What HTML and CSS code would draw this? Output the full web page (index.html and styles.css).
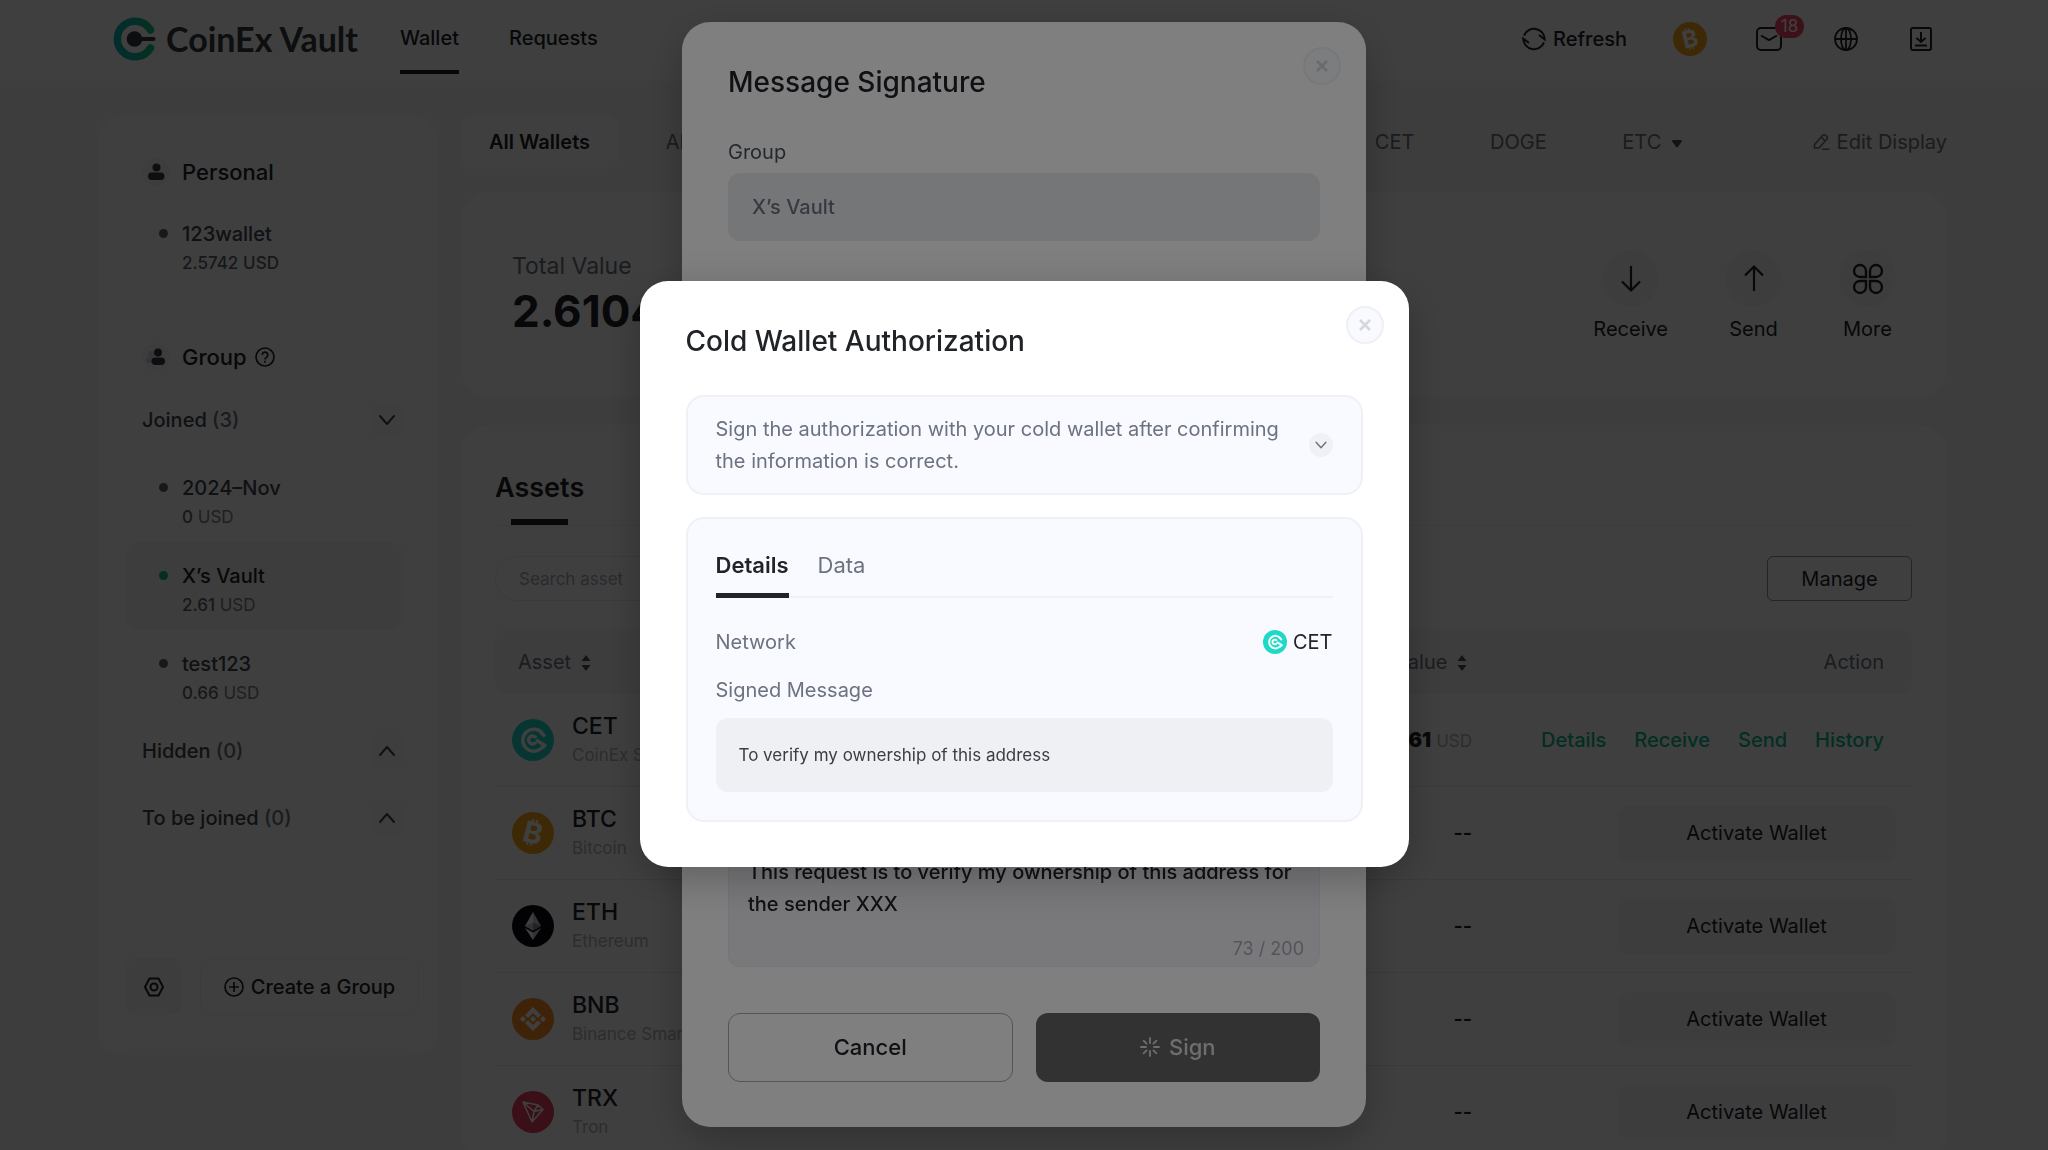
FILE: index.html
```html
<!doctype html>
<html lang="en">
  <head>
    <meta charset="utf-8">
    <title>CoinEx Vault</title>
    <link rel="stylesheet" href="styles.css">
  </head>
  <body>
    <!-- shared icons -->
    <svg class="sprite" width="0" height="0">
      <symbol id="close" viewBox="0 0 16 16"><path d="M3 3l10 10M13 3L3 13" stroke="currentColor" stroke-width="2.6" fill="none"/></symbol>
      <symbol id="down" viewBox="0 0 20 20"><path d="M3 6l7 8 7-8" stroke="currentColor" stroke-width="2" fill="none" stroke-linecap="round" stroke-linejoin="round"/></symbol>
      <symbol id="up" viewBox="0 0 20 20"><path d="M3 14l7-8 7 8" stroke="currentColor" stroke-width="2" fill="none" stroke-linecap="round" stroke-linejoin="round"/></symbol>
      <symbol id="sort" viewBox="0 0 10 18"><path d="M5 1l4.5 6h-9zM5 17L.5 11h9z" fill="currentColor"/></symbol>
      <symbol id="cet" viewBox="0 0 42 42">
        <circle cx="21" cy="21" r="21" fill="#1cd9c8"/>
        <path d="M30.5 14.5A11 11 0 1 0 29 29.500L33 26.500 24 21" fill="none" stroke="#fff" stroke-width="3.400" stroke-linejoin="round"/>
        <path d="M33 17.500L28 12.500M24 19a4 4 0 1 0 0 4" fill="none" stroke="#fff" stroke-width="3.400"/>
      </symbol>
      <symbol id="btc" viewBox="0 0 42 42">
        <circle cx="21" cy="21" r="21" fill="#f9a51e"/>
        <text class="coin-sign" x="21" y="31" text-anchor="middle" transform="rotate(14 21 21)">₿</text>
      </symbol>
      <symbol id="btc-avatar" viewBox="0 0 42 42">
        <circle cx="21" cy="21" r="21" fill="#f9a51e"/>
        <text class="coin-sign" x="21" y="31" text-anchor="middle" transform="rotate(-14 21 21)">₿</text>
      </symbol>
      <symbol id="eth" viewBox="0 0 42 42">
        <circle cx="21" cy="21" r="21" fill="#0a0a14"/>
        <path d="M21 7l-8 14 8 4.500z" fill="#fff"/>
        <path d="M21 7l8 14-8 4.500z" fill="#c8c8cc"/>
        <path d="M13 21l8-3.500v8z" fill="#c8c8cc"/>
        <path d="M29 21l-8-3.500v8z" fill="#8c8c92"/>
        <path d="M13 23l8 4.500V35z" fill="#fff"/>
        <path d="M29 23l-8 4.500V35z" fill="#c8c8cc"/>
      </symbol>
      <symbol id="bnb" viewBox="0 0 42 42">
        <circle cx="21" cy="21" r="21" fill="#f88d22"/>
        <path d="M21 9l8 8-3 3-5-5-5 5-3-3zM21 33l8-8-3-3-5 5-5-5-3 3zM21 18l3 3-3 3-3-3zM11 18l3 3-3 3-3-3zM31 18l3 3-3 3-3-3z" fill="#fff"/>
      </symbol>
      <symbol id="trx" viewBox="0 0 42 42">
        <circle cx="21" cy="21" r="21" fill="#ea3d63"/>
        <path d="M11 11l15 3 5 4.500L20 31zM11 11l11 9.500 4-6.500M22 20.500l9-2M22 20.500L20 31" fill="none" stroke="#fff" stroke-width="1.500" stroke-linejoin="round"/>
      </symbol>
    </svg>

    <header class="header">
      <a class="logo" href="#">
        <svg width="44" height="44" viewBox="0 0 44 44">
          <defs>
            <linearGradient id="logofill" x1="0" x2="1"><stop offset="0" stop-color="#0cb4b4"/><stop offset="1" stop-color="#14c08c"/></linearGradient>
          </defs>
          <path d="M37.500 13A17.800 17.800 0 1 0 37.500 31" fill="none" stroke="url(#logofill)" stroke-width="7.500" stroke-linecap="round"/>
          <circle cx="21.500" cy="22" r="7.800" fill="#36383c"/>
          <path d="M22 22h18.500" stroke="#36383c" stroke-width="4" stroke-linecap="round"/>
        </svg>
        <span>CoinEx Vault</span>
      </a>
      <nav class="nav">
        <a class="active" href="#">Wallet</a>
        <a href="#">Requests</a>
      </nav>
      <div class="tools">
        <button class="refresh" type="button">
          <svg width="24" height="24" viewBox="0 0 24 24" fill="none" stroke="currentColor" stroke-width="2"><path d="M2 8.500A10.800 10.800 0 0 1 22.800 12.500L17 8M22 15.500A10.800 10.800 0 0 1 1.200 11.500L7 16"/></svg>
          Refresh
        </button>
        <svg class="avatar" width="34" height="34"><use href="#btc-avatar"/></svg>
        <button class="mail" type="button" aria-label="Messages">
          <svg width="26" height="24" viewBox="0 0 26 24" fill="none" stroke="currentColor" stroke-width="2"><rect x="1" y="1" width="24" height="22" rx="4"/><path d="M5 8.500l8 4.500 8-4.500"/></svg>
          <span class="badge">18</span>
        </button>
        <button type="button" aria-label="Language">
          <svg width="24" height="24" viewBox="0 0 24 24" fill="none" stroke="currentColor" stroke-width="1.800"><circle cx="12" cy="12" r="11"/><ellipse cx="12" cy="12" rx="5" ry="11"/><path d="M1 12h22M12 1v22"/></svg>
        </button>
        <button type="button" aria-label="Download">
          <svg width="22" height="24" viewBox="0 0 22 24" fill="none" stroke="currentColor" stroke-width="2"><rect x="1" y="1" width="20" height="22" rx="2"/><path d="M11 5v10M6.500 11l4.500 4 4.500-4M5 18.500h12"/></svg>
        </button>
      </div>
    </header>

    <div class="page">
      <aside class="sidebar">
        <h2 class="side-title">
          <svg width="28" height="28" viewBox="0 0 28 28"><circle cx="14" cy="14" r="14" fill="#f4f5f7"/><circle cx="14.500" cy="9.500" r="4" fill="#36393f"/><rect x="6" y="14.500" width="16.500" height="7.500" rx="3.700" fill="#36393f"/></svg>
          Personal
        </h2>
        <a class="vault" href="#">
          <span class="name">123wallet</span>
          <span class="usd"><b>2.5742</b> <b>USD</b></span>
        </a>

        <h2 class="side-title second">
          <svg width="28" height="28" viewBox="0 0 28 28"><circle cx="14" cy="14" r="14" fill="#f4f5f7"/><circle cx="9" cy="11" r="3" fill="#d2d4da"/><rect x="4" y="14.500" width="9" height="5.500" rx="2.500" fill="#d2d4da"/><circle cx="16" cy="9.500" r="4" fill="#36393f"/><rect x="9.500" y="14.500" width="13.500" height="7.500" rx="3.700" fill="#36393f"/></svg>
          Group
          <svg class="help" width="20" height="20" viewBox="0 0 20 20" fill="none" stroke="currentColor" stroke-width="1.700"><circle cx="10" cy="10" r="9"/><path d="M7.200 8a2.800 2.800 0 1 1 4.300 2.300c-1 .7-1.500 1-1.500 2.200"/><path d="M10 13.700v2"/></svg>
        </h2>

        <div class="fold">
          <span>Joined <i>(3)</i></span>
          <button type="button" aria-label="Collapse joined"><svg width="20" height="20"><use href="#down"/></svg></button>
        </div>
        <div class="vaults">
          <a class="vault" href="#">
            <span class="name">2024–Nov</span>
            <span class="usd"><b>0</b> USD</span>
          </a>
          <a class="vault current" href="#">
            <span class="name">X’s Vault</span>
            <span class="usd"><b>2.61</b> USD</span>
          </a>
          <a class="vault" href="#">
            <span class="name">test123</span>
            <span class="usd"><b>0.66</b> USD</span>
          </a>
        </div>
        <div class="fold hidden-list">
          <span>Hidden <i>(0)</i></span>
          <button type="button" aria-label="Expand hidden"><svg width="20" height="20"><use href="#up"/></svg></button>
        </div>
        <div class="fold">
          <span>To be joined <i>(0)</i></span>
          <button type="button" aria-label="Expand to be joined"><svg width="20" height="20"><use href="#up"/></svg></button>
        </div>

        <div class="side-buttons">
          <button class="settings" type="button" aria-label="Settings">
            <svg width="20" height="20" viewBox="0 0 20 20" fill="none" stroke="currentColor" stroke-width="2"><path d="M5.500 1.500h9l4.500 8.500-4.500 8.500h-9L1 10z" stroke-linejoin="round"/><circle cx="10" cy="10" r="3.500"/></svg>
          </button>
          <button class="create" type="button">
            <svg width="20" height="20" viewBox="0 0 20 20" fill="none" stroke="currentColor" stroke-width="1.700"><circle cx="10" cy="10" r="9"/><path d="M10 5v10M5 10h10"/></svg>
            Create a Group
          </button>
        </div>
      </aside>

      <main class="main">
        <div class="tabs-row">
          <div class="tabs">
            <a class="active" href="#">All Wallets</a>
            <a href="#">ARB</a>
            <a href="#">AVAX</a>
            <a href="#">BCH</a>
            <a href="#">BNB</a>
            <a href="#">BTC</a>
            <a href="#">BSC</a>
            <a href="#">CET</a>
            <a href="#">DOGE</a>
            <a class="more-tabs" href="#">ETC <svg width="12" height="10" viewBox="0 0 12 10"><path d="M2 2h8L6 7.500z" fill="#4a505c" stroke="#4a505c" stroke-width="2" stroke-linejoin="round"/></svg></a>
          </div>
          <button class="edit" type="button">
            <svg width="17" height="18" viewBox="0 0 17 18" fill="none" stroke="currentColor" stroke-width="1.600"><path d="M1.500 11.500L10 2.200q1.200-1 2.500 0l1.500 1.300q1 1.200 0 2.500L6 15H1.500zM8.500 4.500l3.500 3.300M9 16.200h7.500"/></svg>
            Edit Display
          </button>
        </div>

        <section class="card total">
          <div>
            <div class="total-label">Total Value</div>
            <div class="total-value">2.6104</div>
          </div>
          <div class="actions">
            <button type="button"><span class="circle"><svg width="26" height="30" viewBox="0 0 26 30" fill="none" stroke="currentColor" stroke-width="2.200"><path d="M13 2v24M4 17.500l9 9 9-9"/></svg></span>Receive</button>
            <button type="button"><span class="circle"><svg width="26" height="30" viewBox="0 0 26 30" fill="none" stroke="currentColor" stroke-width="2.200"><path d="M13 27V3M4 11.500l9-9 9 9"/></svg></span>Send</button>
            <button type="button"><span class="circle"><svg width="32" height="32" viewBox="0 0 32 32" fill="none" stroke="currentColor" stroke-width="2.400"><path d="M14 14H8a6 6 0 1 1 6-6zM18 14h6a6 6 0 1 0-6-6zM14 18H8a6 6 0 1 0 6 6zM18 18h6a6 6 0 1 1-6 6z"/></svg></span>More</button>
          </div>
        </section>

        <section class="card assets">
          <h2><span>Assets</span></h2>
          <div class="filter">
            <input type="text" placeholder="Search asset" aria-label="Search asset">
            <button type="button">Manage</button>
          </div>
          <table>
            <thead>
              <tr>
                <th class="asset">Asset <svg width="10" height="18"><use href="#sort"/></svg></th>
                <th class="value">Value <svg width="10" height="18"><use href="#sort"/></svg></th>
                <th class="action">Action</th>
              </tr>
            </thead>
            <tbody>
              <tr>
                <td><div class="coin"><svg width="42" height="42"><use href="#cet"/></svg><div>CET<small>CoinEx Smart Chain</small></div></div></td>
                <td class="value"><b>2.61</b> <small>USD</small></td>
                <td class="links"><a href="#">Details</a><a href="#">Receive</a><a href="#">Send</a><a href="#">History</a></td>
              </tr>
              <tr>
                <td><div class="coin"><svg width="42" height="42"><use href="#btc"/></svg><div>BTC<small>Bitcoin</small></div></div></td>
                <td class="value">--</td>
                <td class="activate"><button type="button">Activate Wallet</button></td>
              </tr>
              <tr>
                <td><div class="coin"><svg width="42" height="42"><use href="#eth"/></svg><div>ETH<small>Ethereum</small></div></div></td>
                <td class="value">--</td>
                <td class="activate"><button type="button">Activate Wallet</button></td>
              </tr>
              <tr>
                <td><div class="coin"><svg width="42" height="42"><use href="#bnb"/></svg><div>BNB<small>Binance Smart Chain</small></div></div></td>
                <td class="value">--</td>
                <td class="activate"><button type="button">Activate Wallet</button></td>
              </tr>
              <tr>
                <td><div class="coin"><svg width="42" height="42"><use href="#trx"/></svg><div>TRX<small>Tron</small></div></div></td>
                <td class="value">--</td>
                <td class="activate"><button type="button">Activate Wallet</button></td>
              </tr>
            </tbody>
          </table>
        </section>
      </main>
    </div>

    <div class="overlay">
      <form class="modal signature">
        <button class="close" type="button" aria-label="Close"><svg width="16" height="16"><use href="#close"/></svg></button>
        <h1>Message Signature</h1>
        <div class="fields">
          <div class="field">
            <label for="group">Group</label>
            <input id="group" type="text" value="X’s Vault" readonly>
          </div>
          <div class="field">
            <label for="network">Network</label>
            <input id="network" type="text" value="CET" readonly>
          </div>
          <div class="field">
            <label for="address">Address</label>
            <input id="address" type="text" readonly>
          </div>
          <div class="field">
            <label for="signed">Signed Message</label>
            <input id="signed" type="text" value="To verify my ownership of this address" readonly>
          </div>
          <div class="field">
            <label for="remark">Remark</label>
            <div class="area">
              <textarea id="remark" rows="2">This request is to verify my ownership of this address for the sender XXX</textarea>
              <span class="count">73 / 200</span>
            </div>
          </div>
        </div>
        <div class="modal-buttons">
          <button class="cancel" type="button">Cancel</button>
          <button class="sign" type="submit">
            <svg width="20" height="20" viewBox="0 0 20 20" stroke="currentColor" stroke-width="1.800" stroke-linecap="round"><path d="M10 1v5M10 14v5M1 10h5M14 10h5M3.600 3.600l3 3M13.400 13.400l3 3M3.600 16.400l3-3M13.400 6.600l3-3"/></svg>
            Sign
          </button>
        </div>
      </form>
    </div>

    <div class="overlay">
      <div class="modal auth">
        <button class="close" type="button" aria-label="Close"><svg width="16" height="16"><use href="#close"/></svg></button>
        <h1>Cold Wallet Authorization</h1>
        <div class="box tip">
          <p>Sign the authorization with your cold wallet after confirming the information is correct.</p>
          <button type="button" aria-label="Show more"><svg width="14" height="14"><use href="#down"/></svg></button>
        </div>
        <div class="box details">
          <div class="box-tabs">
            <a class="active" href="#">Details</a>
            <a href="#">Data</a>
          </div>
          <div class="line">
            <span>Network</span>
            <span class="network"><svg width="24" height="24"><use href="#cet"/></svg>CET</span>
          </div>
          <div class="line">Signed Message</div>
          <div class="message">To verify my ownership of this address</div>
        </div>
      </div>
    </div>
  </body>
</html>
```
FILE: styles.css
```css
* {
  box-sizing: border-box;
  margin: 0;
  padding: 0;
}

body {
  height: 100vh;
  overflow: hidden;
  background: #f4f5f7;
  color: #202328;
  font-family: Inter, "Liberation Sans", sans-serif;
  font-size: 20px;
}

a {
  color: inherit;
  text-decoration: none;
}

button, input, textarea {
  font: inherit;
  color: inherit;
  border: none;
  background: none;
}

svg {
  flex: none;
}

.sprite {
  display: none;
}

.coin-sign {
  font-family: Inter, sans-serif;
  font-size: 29px;
  font-weight: 700;
  fill: #fff;
}

/* header */
.header {
  display: flex;
  align-items: center;
  height: 81px;
  padding: 0 116px 4px 113px;
  background: #fff;
}

.logo {
  display: flex;
  align-items: center;
  gap: 9px;
  color: #36383c;
  font-family: Lato, sans-serif;
  font-size: 34px;
  font-weight: 700;
}

.nav {
  display: flex;
  gap: 50px;
  margin-left: 42px;
  font-weight: 500;
}

.nav a {
  padding: 21px 0 18px;
  line-height: 28px;
  border-bottom: 4px solid transparent;
}

.nav a.active {
  border-color: #202328;
}

.tools {
  display: flex;
  align-items: center;
  margin-left: auto;
}

.tools button {
  display: flex;
  align-items: center;
  margin-left: 52px;
}

.tools .refresh {
  gap: 7px;
  font-weight: 500;
}

.avatar {
  margin-left: 46px;
}

.tools .mail {
  position: relative;
  margin-left: 49px;
}

.badge {
  position: absolute;
  left: 19px;
  top: -12px;
  width: 29px;
  height: 23px;
  border-radius: 12px;
  background: #f24668;
  color: #fff;
  font-size: 17px;
  line-height: 23px;
  text-align: center;
}

/* layout */
.page {
  display: flex;
  align-items: flex-start;
  gap: 22px;
  padding: 34px 101px 0 97px;
}

.main {
  flex: 1;
  min-width: 0;
}

.card {
  border-radius: 28px;
  background: #fff;
}

/* sidebar */
.sidebar {
  flex: none;
  width: 342px;
  padding: 42px 20px 40px 28px;
  border-radius: 28px;
  background: #fff;
}

.side-title {
  display: flex;
  align-items: center;
  gap: 12px;
  padding-left: 17px;
  font-size: 22px;
  font-weight: 500;
  line-height: 30px;
  margin-bottom: 13px;
}

.side-title.second {
  margin-top: 54px;
  margin-bottom: 31px;
}

.side-title .help {
  margin-left: -4px;
}

.vaults {
  margin: 17px 0 16px;
}

.vault {
  position: relative;
  display: block;
  height: 88px;
  margin-right: 15px;
  padding: 20px 20px 10px 57px;
  border-radius: 16px;
  color: #3f444e;
  font-weight: 500;
}

.vault::before {
  content: "";
  position: absolute;
  left: 34px;
  top: 29px;
  width: 9px;
  height: 9px;
  border-radius: 50%;
  background: #5c6070;
}

.vault .name {
  display: block;
  line-height: 28px;
}

.vault .usd {
  display: block;
  color: #7a808c;
  font-size: 17px;
  font-weight: 400;
  line-height: 30px;
}

.vault .usd b {
  color: #5c626e;
  font-weight: 500;
}

.vault.current {
  background: #f4f5f7;
  color: #202328;
}

.vault.current::before {
  background: #14b88c;
}

.fold {
  display: flex;
  align-items: center;
  justify-content: space-between;
  margin-right: 15px;
  padding-left: 17px;
  color: #3f444e;
  font-weight: 500;
}

.fold i {
  color: #6b7280;
  font-style: normal;
}

.fold button {
  display: flex;
  align-items: center;
  justify-content: center;
  width: 34px;
  height: 34px;
  border-radius: 8px;
  background: #fafafb;
}

.fold.hidden-list {
  margin-bottom: 33px;
}

.side-buttons {
  display: flex;
  gap: 18px;
  margin-top: 123px;
}

.side-buttons button {
  display: flex;
  align-items: center;
  justify-content: center;
  gap: 7px;
  height: 57px;
  border-radius: 12px;
  font-weight: 500;
}

.side-buttons .settings {
  width: 57px;
  background: #f4f5f7;
}

.side-buttons .create {
  flex: 1;
  border: 1px solid #f0f1f4;
}

/* wallet tabs */
.tabs-row {
  display: flex;
  align-items: center;
  justify-content: space-between;
  color: #6b7280;
}

.tabs {
  display: flex;
  justify-content: space-between;
  flex: 0 1 1250px;
}

.tabs a {
  padding: 0 28px;
  border-radius: 12px;
  line-height: 54px;
}

.tabs a.active {
  background: #fff;
  color: #202328;
  font-weight: 600;
}

.more-tabs svg {
  margin-left: 4px;
}

.edit {
  display: flex;
  align-items: center;
  gap: 7px;
}

/* total */
.total {
  display: flex;
  justify-content: space-between;
  margin-top: 23px;
  padding: 58px 51px 54px;
}

.total-label {
  color: #6b7280;
  font-size: 23px;
  line-height: 32px;
}

.total-value {
  font-size: 44px;
  font-weight: 700;
  line-height: 58px;
}

.actions {
  display: flex;
  gap: 57px;
}

.actions button {
  display: flex;
  flex-direction: column;
  align-items: center;
  gap: 8px;
  line-height: 28px;
}

.circle {
  display: flex;
  align-items: center;
  justify-content: center;
  width: 57px;
  height: 57px;
  border-radius: 50%;
  background: #f6f7f9;
}

/* assets */
.assets {
  margin-top: 28px;
  padding: 44px 35px 0 34px;
}

.assets h2 {
  border-bottom: 1px solid #f0f1f4;
  font-size: 27px;
  font-weight: 600;
  line-height: 38px;
}

.assets h2 span {
  display: inline-block;
}

.assets h2 span::after {
  content: "";
  display: block;
  width: 57px;
  height: 6px;
  margin: 12px auto 0;
  background: #202328;
}

.filter {
  display: flex;
  justify-content: space-between;
  margin: 30px 0 28px;
}

.filter input {
  width: 330px;
  height: 45px;
  padding: 0 23px;
  border: 1px solid #ebecf0;
  border-radius: 23px;
  font-size: 17px;
}

.filter input::placeholder {
  color: #a6abb8;
}

.filter button {
  width: 145px;
  border: 1px solid #8a909c;
  border-radius: 6px;
}

table {
  width: 100%;
  border-collapse: separate;
  border-spacing: 0;
}

th {
  height: 65px;
  background: #f4f5f7;
  color: #6b7280;
  font-weight: 400;
}

th svg {
  margin-left: 4px;
  vertical-align: -3px;
  color: #4a505c;
}

th.asset {
  padding-left: 23px;
  border-radius: 12px 0 0 12px;
  text-align: left;
}

th.value {
  padding-right: 5px;
  text-align: right;
}

th.action {
  width: 440px;
  padding-right: 28px;
  border-radius: 0 12px 12px 0;
  text-align: right;
}

td {
  height: 93px;
  border-bottom: 1px solid #ebecf0;
}

.coin {
  display: flex;
  align-items: center;
  gap: 18px;
  padding-left: 17px;
  font-size: 23px;
  font-weight: 500;
  line-height: 30px;
}

.coin small {
  display: block;
  color: #b0b4be;
  font-size: 17px;
  font-weight: 400;
  line-height: 28px;
}

td.value {
  font-weight: 600;
  text-align: right;
}

td.value small {
  color: #b0b4be;
  font-size: 17px;
  font-weight: 400;
}

.links {
  padding-right: 28px;
  color: #0cb88c;
  font-weight: 500;
  text-align: right;
}

.links a {
  margin-left: 28px;
}

.activate {
  padding-right: 16px;
  text-align: right;
}

.activate button {
  width: 279px;
  height: 55px;
  border-radius: 12px;
  background: #f4f5f7;
}

/* modals */
.overlay {
  position: fixed;
  inset: 0;
  display: flex;
  align-items: center;
  justify-content: center;
  padding-bottom: 2px;
  background: rgba(0, 0, 0, .5);
}

.modal {
  position: relative;
  max-width: 94%;
  padding: 39px 46px 45px;
  border-radius: 28px;
  background: #fff;
  box-shadow: 0 12px 40px rgba(0, 0, 0, .24);
}

.modal h1 {
  font-size: 28px;
  font-weight: 500;
  line-height: 42px;
}

.close {
  position: absolute;
  top: 25px;
  right: 25px;
  display: flex;
  align-items: center;
  justify-content: center;
  width: 38px;
  height: 38px;
  border: 2px solid #eff0f5;
  border-radius: 50%;
  background: #f9faff;
  color: #d5d7df;
}

.signature {
  width: 684px;
}

.fields {
  display: flex;
  flex-direction: column;
  gap: 61px;
  margin-top: 34px;
}

.field label {
  display: block;
  color: #4a505c;
  line-height: 30px;
}

.field input {
  display: block;
  width: 100%;
  height: 68px;
  margin-top: 6px;
  padding: 0 24px;
  border-radius: 12px;
  background: #ebedf1;
  color: #6b7280;
  font-weight: 500;
}

.area {
  margin-top: 6px;
  padding: 22px 15px 4px 19px;
  border: 1px solid #e8eaf2;
  border-radius: 12px;
  background: #f2f3f8;
}

.area textarea {
  display: block;
  width: 100%;
  height: 80px;
  resize: none;
  font-weight: 500;
  line-height: 32px;
}

.count {
  display: block;
  color: #a6abb8;
  font-size: 18px;
  line-height: 26px;
  text-align: right;
}

.modal-buttons {
  display: grid;
  grid-template-columns: 1fr 1fr;
  gap: 23px;
  margin-top: 46px;
}

.modal-buttons button {
  display: flex;
  align-items: center;
  justify-content: center;
  gap: 9px;
  height: 69px;
  border-radius: 12px;
  font-size: 22px;
  font-weight: 500;
}

.modal-buttons .cancel {
  border: 1px solid #a0a8b8;
}

.modal-buttons .sign {
  background: #646464;
  color: #dcdcdc;
}

.auth {
  width: 769px;
}

.box {
  border: 2px solid #f0f1f6;
  border-radius: 18px;
  background: #f9faff;
}

.tip {
  display: flex;
  align-items: center;
  justify-content: space-between;
  margin-top: 33px;
  padding: 16px 28px;
  color: #6b7280;
}

.tip p {
  width: 575px;
  line-height: 32px;
}

.tip button {
  display: flex;
  align-items: center;
  justify-content: center;
  width: 24px;
  height: 24px;
  border-radius: 50%;
  background: #f0f1f5;
}

.details {
  margin-top: 22px;
  padding: 24px 28px 28px;
  color: #6b7280;
}

.box-tabs {
  display: flex;
  gap: 29px;
  margin-bottom: 20px;
  border-bottom: 2px solid #f0f1f6;
  font-size: 22px;
  line-height: 44px;
}

.box-tabs a {
  margin-bottom: -2px;
  padding-bottom: 6px;
  border-bottom: 5px solid transparent;
}

.box-tabs .active {
  border-color: #202328;
  color: #202328;
  font-weight: 600;
}

.line {
  display: flex;
  justify-content: space-between;
  line-height: 48px;
}

.network {
  display: flex;
  align-items: center;
  gap: 6px;
  color: #202328;
}

.message {
  margin-top: 4px;
  padding: 23px;
  border-radius: 12px;
  background: #eff0f4;
  color: #3a3d44;
  font-size: 17px;
  line-height: 28px;
}
```
